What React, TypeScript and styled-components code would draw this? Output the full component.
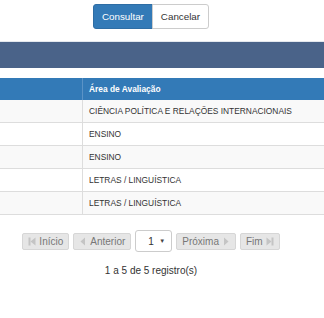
import React from 'react'
import styled, { createGlobalStyle } from 'styled-components'

const GlobalStyle = createGlobalStyle`
  html, body {
    margin: 0;
    padding: 0;
    background: #fff;
    font-family: "Liberation Sans", Arial, sans-serif;
    overflow: hidden;
  }
`

const Page = styled.div`
  width: 324px;
  height: 318px;
  display: flex;
  flex-direction: column;
`

const Actions = styled.div`
  width: 302px;
  display: flex;
  justify-content: center;
  padding-top: 4px;
`

const Btn = styled.button<{ primary?: boolean }>`
  height: 25px;
  padding: 0 8px;
  font-family: inherit;
  font-size: 9.8px;
  color: ${(p) => (p.primary ? '#fff' : '#333')};
  background: ${(p) => (p.primary ? '#337ab7' : '#fff')};
  border: 1px solid ${(p) => (p.primary ? '#2e6da4' : '#ccc')};
  border-radius: ${(p) => (p.primary ? '3px 0 0 3px' : '0 3px 3px 0')};
  margin-left: ${(p) => (p.primary ? '0' : '-1px')};
`

const DarkBar = styled.div`
  margin-top: 12px;
  height: 26px;
  background: #4a6389;
  border-top: 1px solid #e4e8ee;
`

const Table = styled.div`
  margin-top: 10px;
  display: grid;
  grid-template-columns: 82px 1fr;
  font-size: 8.4px;
`

const HeadCell = styled.div`
  height: 22px;
  display: flex;
  align-items: center;
  padding-left: 6px;
  background: #337ab7;
  color: #fff;
  font-weight: bold;
  border-left: 1px solid #5b93c6;
  &:first-child {
    border-left: none;
  }
`

const Cell = styled.div<{ striped?: boolean }>`
  height: 22px;
  display: flex;
  align-items: center;
  padding-left: 6px;
  color: #333;
  background: ${(p) => (p.striped ? '#f9f9f9' : '#fff')};
  border-bottom: 1px solid #ddd;
  border-left: 1px solid #ddd;
  &:nth-child(odd) {
    border-left: none;
  }
`

const Pager = styled.div`
  width: 302px;
  margin-top: 15px;
  display: flex;
  justify-content: center;
  align-items: center;
  gap: 4px;
`

const PageBtn = styled.button`
  height: 17px;
  padding: 0 5px;
  display: flex;
  align-items: center;
  gap: 3px;
  font-family: inherit;
  font-size: 10px;
  color: #777;
  background: #e6e6e6;
  border: 1px solid #d6d6d6;
  border-radius: 2px;
`

const Select = styled.div`
  width: 37px;
  height: 22px;
  box-sizing: border-box;
  display: flex;
  align-items: center;
  justify-content: space-between;
  padding: 0 6px 0 12px;
  font-size: 10px;
  color: #333;
  background: #fff;
  border: 1px solid #ccc;
  border-radius: 3px;
`

const Caret = styled.span`
  font-size: 6px;
  color: #444;
`

const Info = styled.div`
  width: 302px;
  margin-top: 13px;
  text-align: center;
  font-size: 10px;
  color: #333;
`

const Icon = ({ kind }: { kind: 'first' | 'prev' | 'next' | 'last' }) => {
  const c = '#c4c4c4'
  return (
    <svg width="8" height="9" viewBox="0 0 8 9">
      {kind === 'first' && (
        <>
          <rect x="0.5" y="0.5" width="2" height="8" fill={c} />
          <polygon points="7.5,0.5 7.5,8.5 2.5,4.5" fill={c} />
        </>
      )}
      {kind === 'prev' && <polygon points="6,0.5 6,8.5 1.5,4.5" fill={c} />}
      {kind === 'next' && <polygon points="2,0.5 2,8.5 6.5,4.5" fill={c} />}
      {kind === 'last' && (
        <>
          <polygon points="0.5,0.5 0.5,8.5 5.5,4.5" fill={c} />
          <rect x="5.5" y="0.5" width="2" height="8" fill={c} />
        </>
      )}
    </svg>
  )
}

const rows = [
  'CIÊNCIA POLÍTICA E RELAÇÕES INTERNACIONAIS',
  'ENSINO',
  'ENSINO',
  'LETRAS / LINGUÍSTICA',
  'LETRAS / LINGUÍSTICA',
]

function App() {
  return (
    <Page>
      <GlobalStyle />
      <Actions>
        <Btn primary>Consultar</Btn>
        <Btn>Cancelar</Btn>
      </Actions>
      <DarkBar />
      <Table>
        <HeadCell></HeadCell>
        <HeadCell>Área de Avaliação</HeadCell>
        {rows.map((r, i) => (
          <React.Fragment key={i}>
            <Cell striped={i % 2 === 0}></Cell>
            <Cell striped={i % 2 === 0}>{r}</Cell>
          </React.Fragment>
        ))}
      </Table>
      <Pager>
        <PageBtn>
          <Icon kind="first" />
          Início
        </PageBtn>
        <PageBtn>
          <Icon kind="prev" />
          Anterior
        </PageBtn>
        <Select>
          1<Caret>▼</Caret>
        </Select>
        <PageBtn>
          Próxima
          <Icon kind="next" />
        </PageBtn>
        <PageBtn>
          Fim
          <Icon kind="last" />
        </PageBtn>
      </Pager>
      <Info>1 a 5 de 5 registro(s)</Info>
    </Page>
  )
}

export default App
